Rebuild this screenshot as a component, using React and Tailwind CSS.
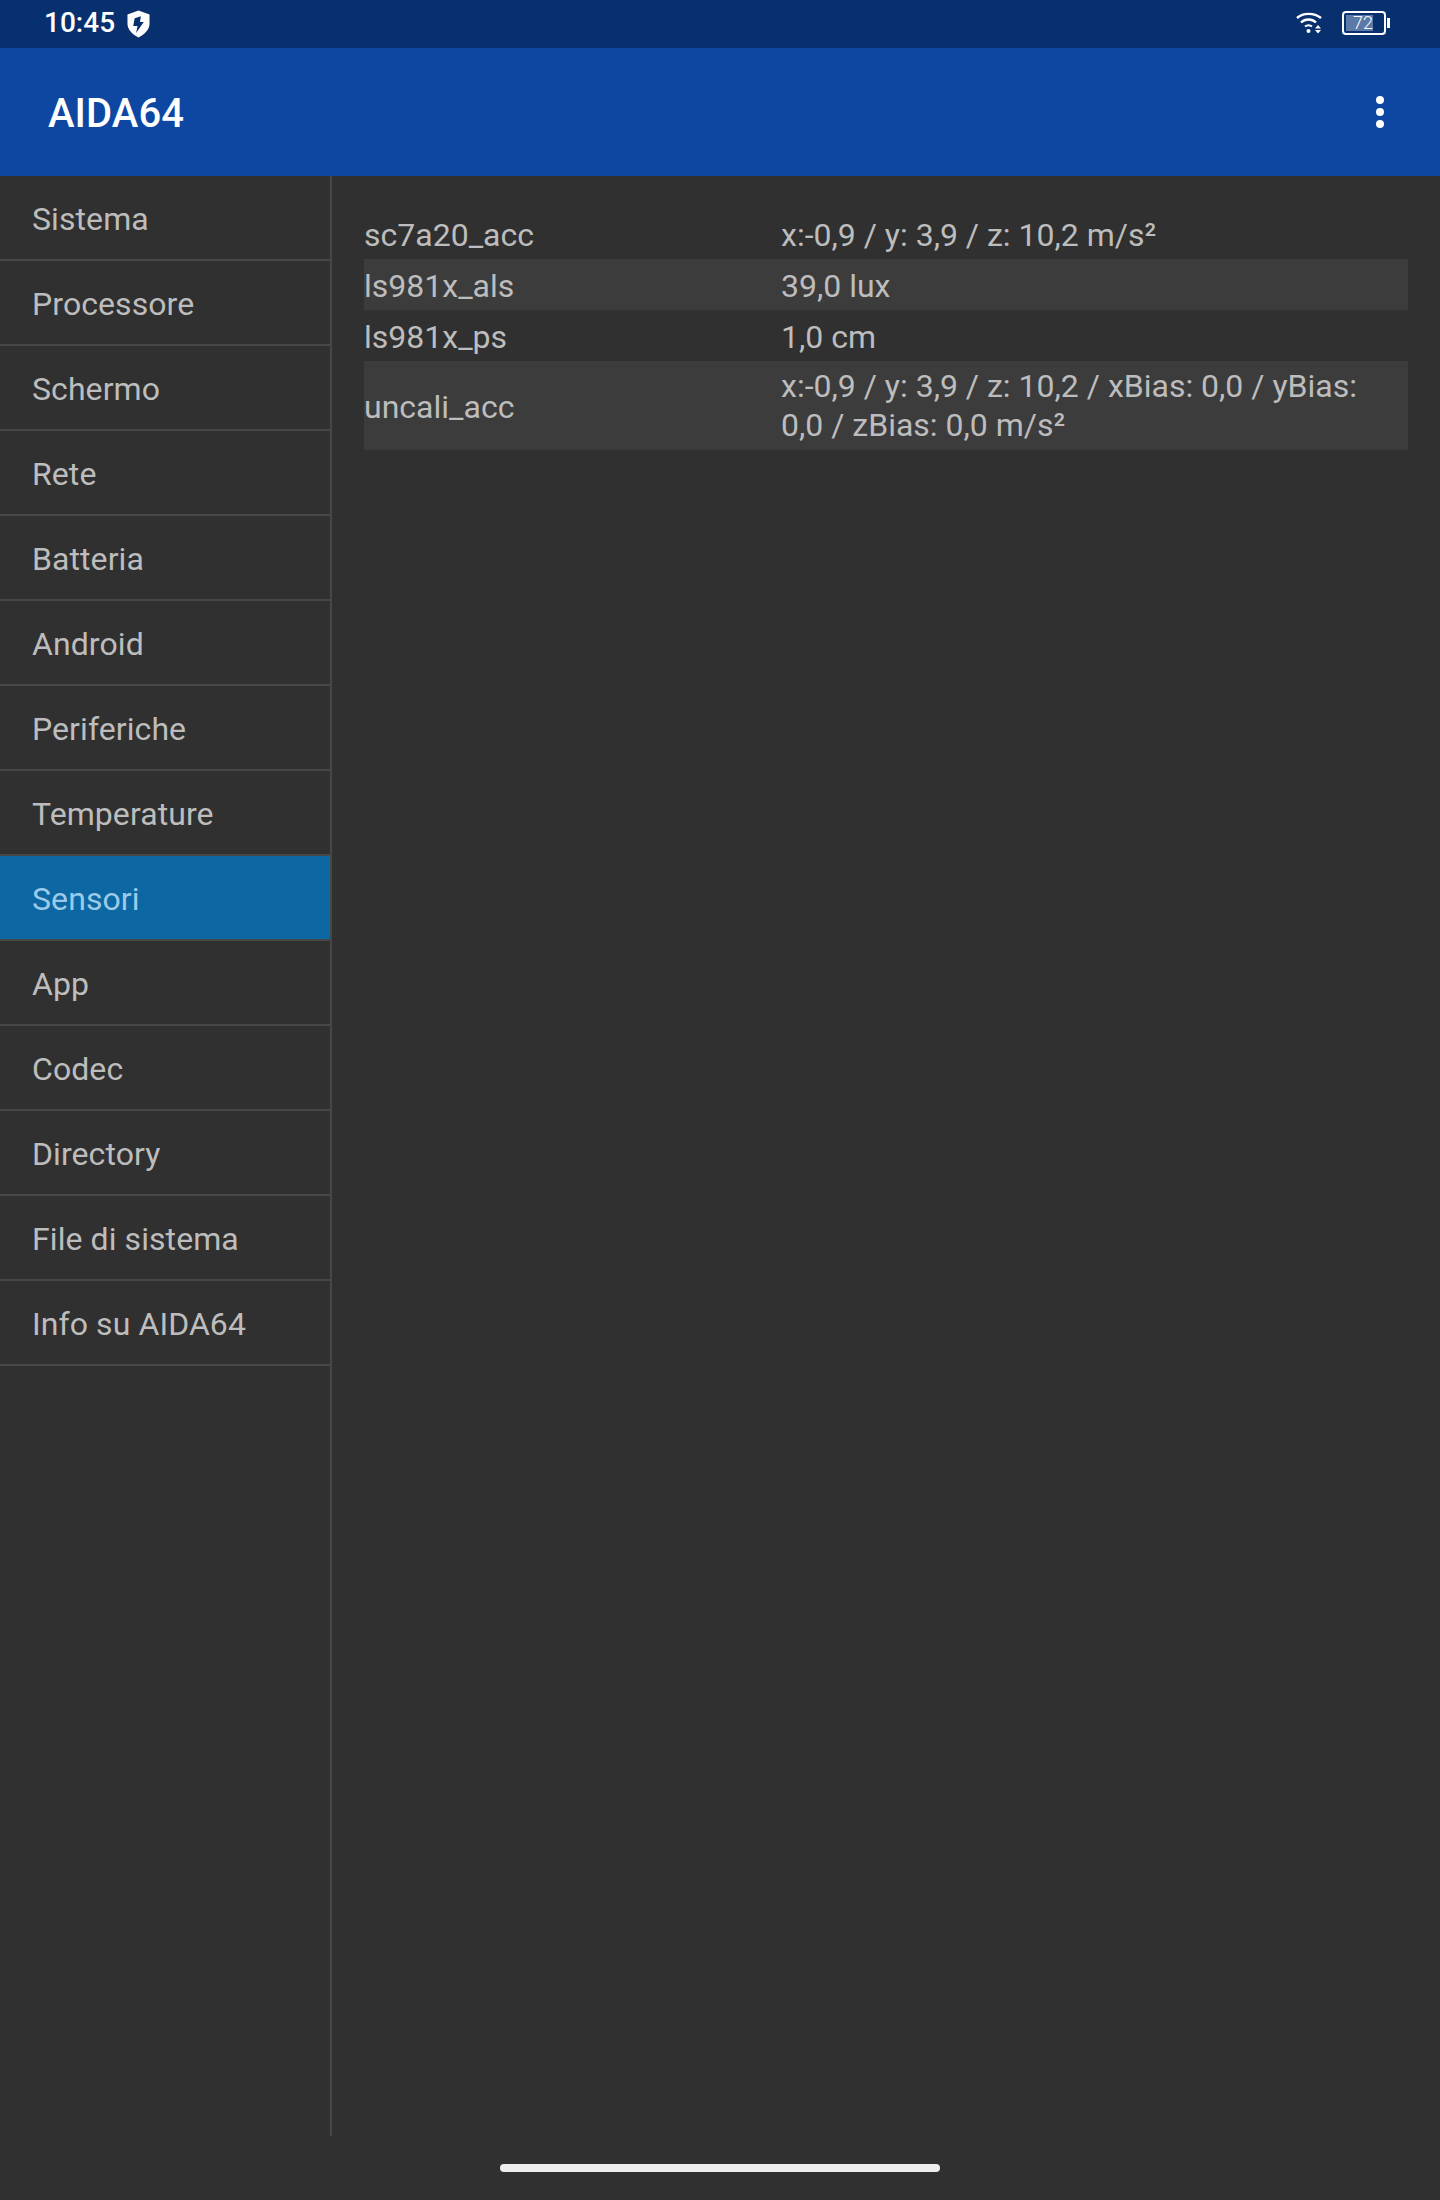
import React from 'react';

const menu = ['Sistema', 'Processore', 'Schermo', 'Rete', 'Batteria', 'Android', 'Periferiche', 'Temperature', 'Sensori', 'App', 'Codec', 'Directory', 'File di sistema', 'Info su AIDA64'];

const rows = [
  ['sc7a20_acc', 'x:-0,9 / y: 3,9 / z: 10,2 m/s²'],
  ['ls981x_als', '39,0 lux'],
  ['ls981x_ps', '1,0 cm'],
  ['uncali_acc', 'x:-0,9 / y: 3,9 / z: 10,2 / xBias: 0,0 / yBias: 0,0 / zBias: 0,0 m/s²'],
];

const ShieldIcon = () => (
  <svg width="23" height="28" viewBox="0 0 24 28" className="ml-[12px]">
    <path fillRule="evenodd" fill="#fff" d="M12 0 L23.5 4 V14 C23.5 20 18 25 12 28 C6 25 0.5 20 0.5 14 V4 Z M14.5 6 L8 8 L6.5 16 H11 L9.5 23.5 L17.5 12 H13.5 Z" />
  </svg>
);

const WifiIcon = () => (
  <svg width="26" height="22" viewBox="0 0 26 22" fill="none">
    <path d="M1 6 C7 0.5 18 0.5 25 6" stroke="#fff" strokeWidth="2.4" />
    <path d="M5 10.5 C9 6.5 16 6.5 20 10.5" stroke="#fff" strokeWidth="2.4" />
    <path d="M9 14.5 C11 12.8 14 12.8 16 14.5" stroke="#fff" strokeWidth="2.2" />
    <circle cx="12.5" cy="19" r="2" fill="#fff" />
    <path d="M22 13 L25 16.5 H19 Z M22 21.5 L19 18 H25 Z" fill="#fff" />
  </svg>
);

const BatteryIcon = () => (
  <div className="flex items-center ml-[20px]">
    <div className="w-[44px] h-[24px] rounded-[4px] border-2 border-white p-[2px] flex">
      <div className="w-[27px] bg-[#5b7aa8] flex items-center justify-end">
        <span className="text-[18px] font-light leading-none text-white">72</span>
      </div>
    </div>
    <div className="w-[3px] h-[10px] bg-white ml-[1px]" />
  </div>
);

export default function App() {
  return (
    <div className="w-[1440px] h-[2200px] flex flex-col bg-[#303030] font-['Roboto',sans-serif] overflow-hidden">
      {/* status bar */}
      <div className="h-[48px] shrink-0 bg-[#082f6e] flex items-center pl-[44px] pr-[50px] text-white">
        <span className="w-[71px] text-[28px] font-medium leading-none mb-[2px]">10:45</span>
        <ShieldIcon />
        <div className="ml-auto flex items-center mb-[3px]">
          <WifiIcon />
          <BatteryIcon />
        </div>
      </div>

      {/* app bar */}
      <div className="h-[128px] shrink-0 bg-[#0d47a1] flex items-center pl-[48px] pr-[56px]">
        <span className="text-[40px] font-medium text-white leading-none pt-[4px] tracking-[0.1px]">AIDA64</span>
        <div className="ml-auto flex flex-col gap-[4px]">
          <div className="w-[8px] h-[8px] rounded-full bg-white" />
          <div className="w-[8px] h-[8px] rounded-full bg-white" />
          <div className="w-[8px] h-[8px] rounded-full bg-white" />
        </div>
      </div>

      <div className="h-[1960px] shrink-0 flex">
        <div className="w-[332px] shrink-0 border-r-2 border-[#474747]">
          {menu.map((m) => (
            <div
              key={m}
              className={
                m === 'Sensori'
                  ? 'h-[85px] border-b-2 border-[#474747] bg-[#0d67a3] text-[#9bcbe9] flex items-center pl-[32px] pt-[2px] text-[32px] tracking-[0.08px]'
                  : 'h-[85px] border-b-2 border-[#474747] text-[#bdbdbd] flex items-center pl-[32px] pt-[2px] text-[32px] tracking-[0.08px]'
              }
            >
              {m}
            </div>
          ))}
        </div>

        <div className="flex-1 pt-[32px] pl-[32px] pr-[32px]">
          {rows.map(([name, value], i) => (
            <div
              key={name}
              className={
                i % 2 === 1
                  ? 'flex items-center min-h-[51px] pt-[8px] pb-[4px] bg-[#3c3c3c] text-[#bdbdbd] text-[32px] leading-[38.5px]'
                  : 'flex items-center min-h-[51px] pt-[8px] pb-[4px] text-[#bdbdbd] text-[32px] leading-[38.5px]'
              }
            >
              <div className="w-[417px] shrink-0">{name}</div>
              <div className={i === 3 ? 'flex-1 pr-[8px] -translate-y-[2px]' : 'flex-1 pr-[8px]'}>{value}</div>
            </div>
          ))}
        </div>
      </div>

      <div className="flex-1 flex items-center justify-center">
        <div className="w-[440px] h-[8px] rounded-full bg-[#eeeeee]" />
      </div>
    </div>
  );
}
